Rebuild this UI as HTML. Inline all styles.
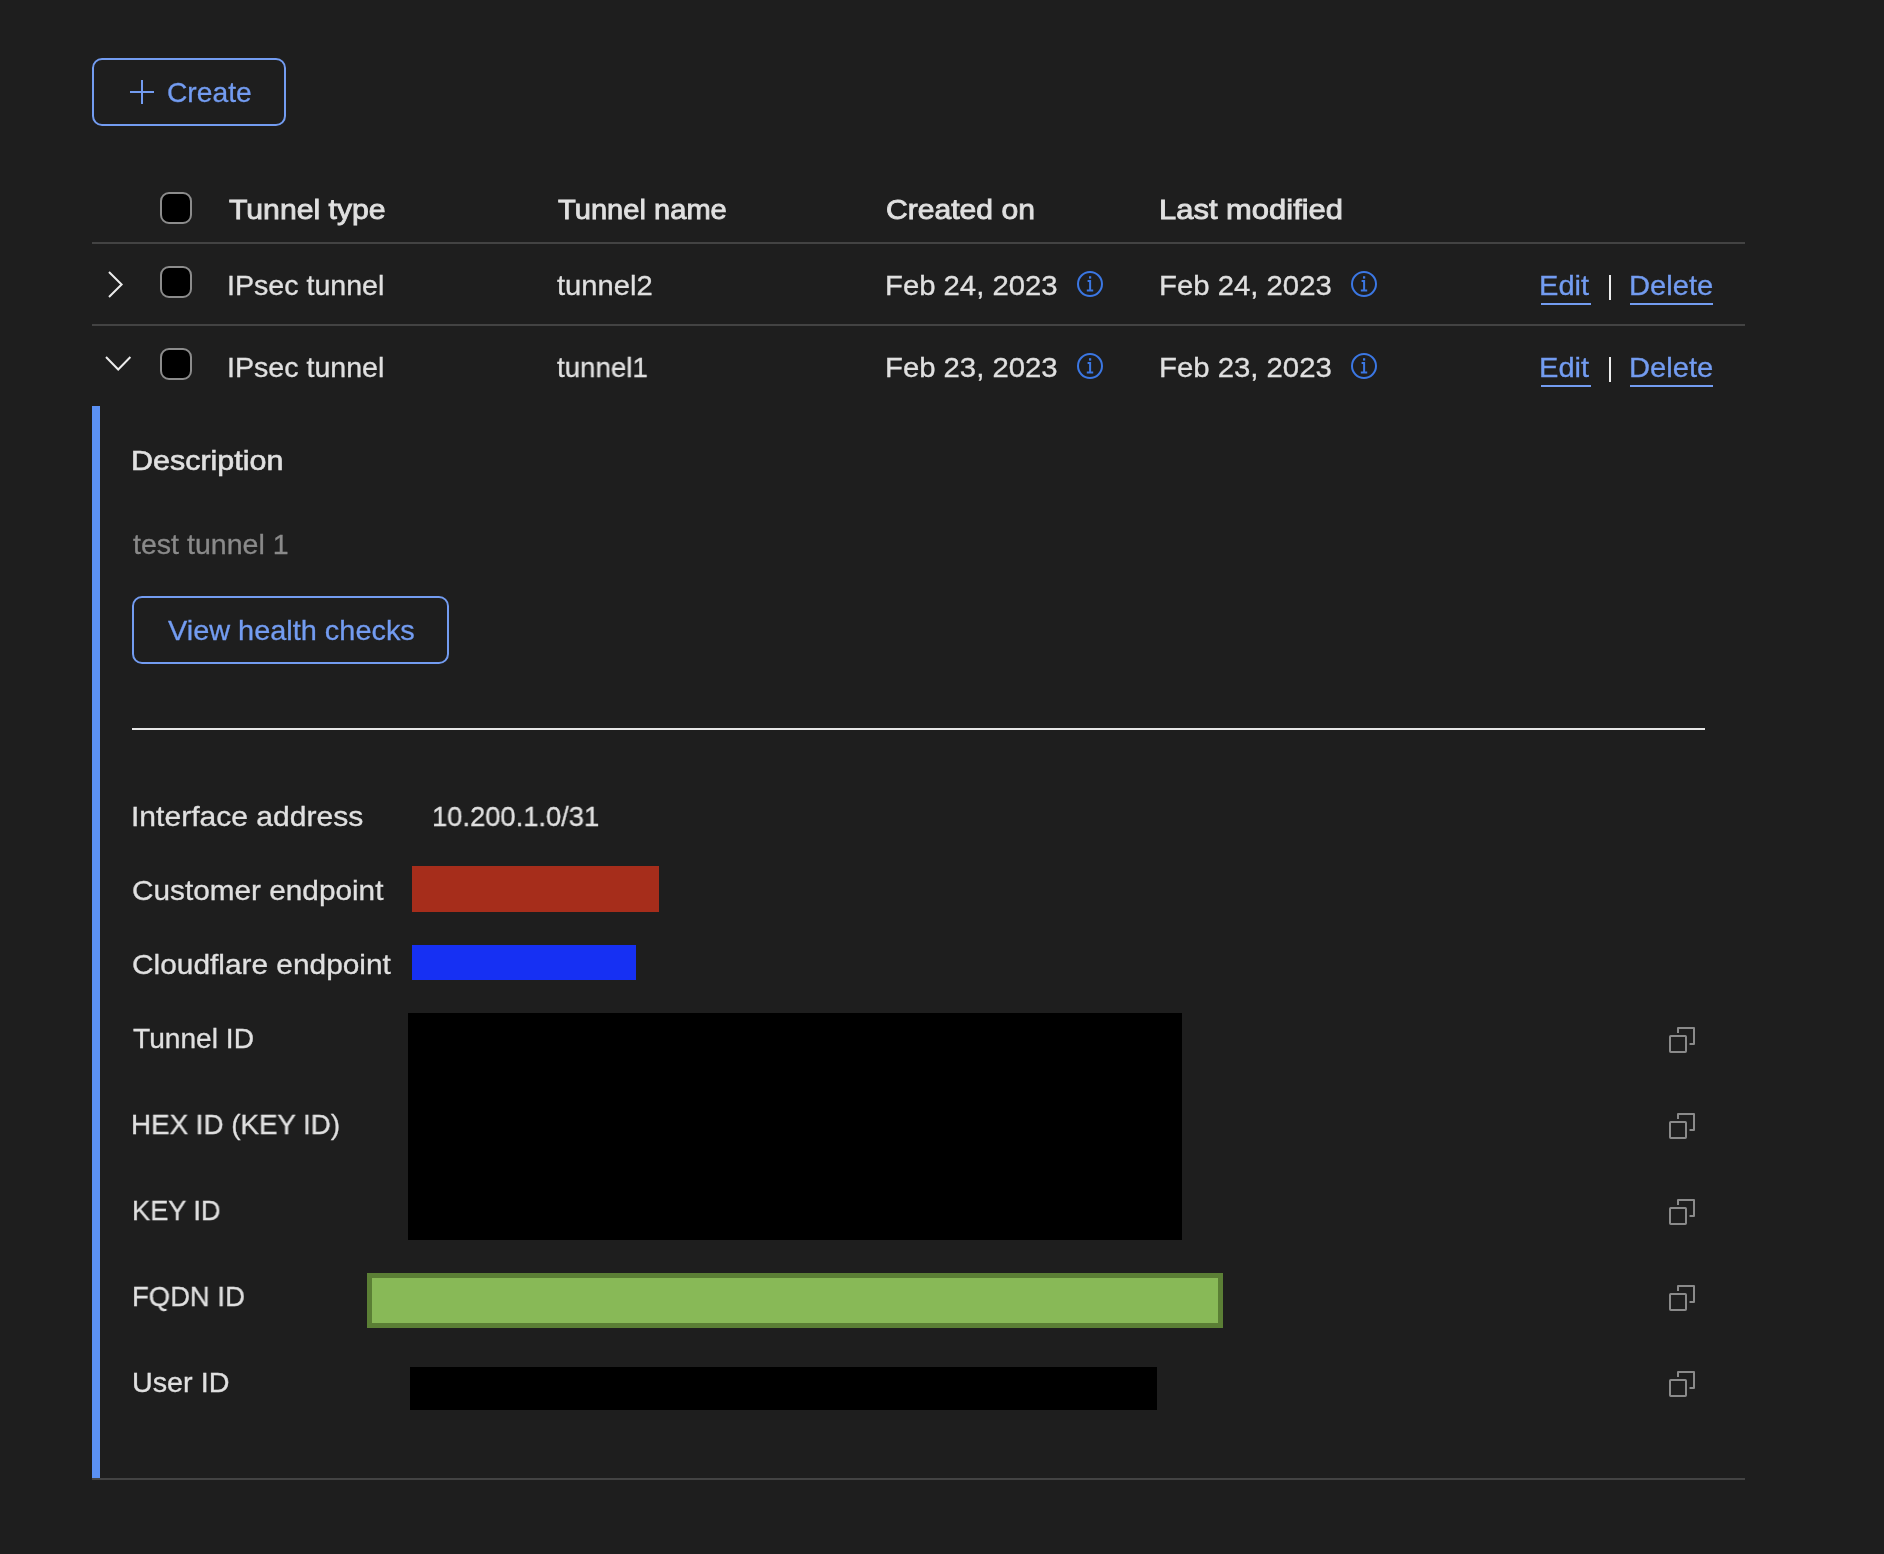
<!DOCTYPE html>
<html>
<head>
<meta charset="utf-8">
<style>
html,body{margin:0;padding:0;}
body{width:1884px;height:1554px;background:#1e1e1e;position:relative;overflow:hidden;font-family:"Liberation Sans",sans-serif;color:#e0e0e0;font-size:28px;}
.t{position:absolute;white-space:nowrap;line-height:32px;height:32px;transform-origin:0 0;will-change:transform;-webkit-text-stroke:0.3px currentColor;}
.b{-webkit-text-stroke:0.85px currentColor;}
.blue,.lnk{color:#739cf1;}
.btn{position:absolute;box-sizing:border-box;border:2px solid #739cf1;border-radius:10px;}
.hl{position:absolute;height:2px;background:#434343;}
.cb{position:absolute;box-sizing:border-box;width:32px;height:32px;border:2px solid #8c8c8c;border-radius:9px;background:#000;}
.ul{position:absolute;height:2px;background:#739cf1;}
.sep{position:absolute;width:2.6px;height:25px;background:#ededed;}
.box{position:absolute;}
svg{position:absolute;overflow:visible;}
</style>
</head>
<body>
<div class="btn" style="left:92px;top:58px;width:194px;height:68px;"></div>
<svg style="left:130px;top:80px" width="24" height="24"><path d="M12 0V24M0 12H24" stroke="#739cf1" stroke-width="2" fill="none"/></svg>
<div class="t blue" id="create" style="left:166.99px;top:77px;transform:scaleX(1.0074);">Create</div>

<div class="cb" style="left:160px;top:192px;"></div>
<div class="t b" id="h1" style="left:229.00px;top:193.5px;transform:scaleX(1.0779);">Tunnel type</div>
<div class="t b" id="h2" style="left:558.38px;top:193.5px;transform:scaleX(1.0395);">Tunnel name</div>
<div class="t b" id="h3" style="left:885.55px;top:193.5px;transform:scaleX(1.0745);">Created on</div>
<div class="t b" id="h4" style="left:1158.53px;top:193.5px;transform:scaleX(1.1049);">Last modified</div>
<div class="hl" style="left:92px;top:242px;width:1653px;"></div>

<svg style="left:108px;top:271px" width="16" height="27"><path d="M1 1L13.6 13.5L1 26" stroke="#ececec" stroke-width="2" fill="none"/></svg>
<div class="cb" style="left:160px;top:266px;"></div>
<div class="t " id="r1a" style="left:227.45px;top:270px;transform:scaleX(1.0212);">IPsec tunnel</div>
<div class="t " id="r1b" style="left:557.18px;top:270px;transform:scaleX(1.0418);">tunnel2</div>
<div class="t " id="r1c" style="left:884.73px;top:270px;transform:scaleX(1.0457);">Feb 24, 2023</div>
<svg style="left:1077px;top:271px" width="26" height="26"><circle cx="13" cy="13" r="12" stroke="#3b77e3" stroke-width="2" fill="none"/><rect x="12" y="5.2" width="2.2" height="2.4" fill="#3b77e3"/><path d="M10.6 10H13.1V19.4M9.8 19.6H16.2" stroke="#3b77e3" stroke-width="2" fill="none"/></svg>
<div class="t " id="r1d" style="left:1158.72px;top:270px;transform:scaleX(1.0469);">Feb 24, 2023</div>
<svg style="left:1351px;top:271px" width="26" height="26"><circle cx="13" cy="13" r="12" stroke="#3b77e3" stroke-width="2" fill="none"/><rect x="12" y="5.2" width="2.2" height="2.4" fill="#3b77e3"/><path d="M10.6 10H13.1V19.4M9.8 19.6H16.2" stroke="#3b77e3" stroke-width="2" fill="none"/></svg>
<div class="t lnk" id="r1e" style="left:1539.11px;top:270px;transform:scaleX(1.0385);">Edit</div>
<div class="ul" style="left:1541px;top:303px;width:50px;"></div>
<div class="sep" style="left:1608.5px;top:275px;"></div>
<div class="t lnk" id="r1f" style="left:1628.51px;top:270px;transform:scaleX(1.0411);">Delete</div>
<div class="ul" style="left:1630px;top:303px;width:83px;"></div>
<div class="hl" style="left:92px;top:324px;width:1653px;"></div>

<svg style="left:105px;top:356px" width="27" height="16"><path d="M1 1L13.2 13.5L25.4 1" stroke="#ececec" stroke-width="2" fill="none"/></svg>
<div class="cb" style="left:160px;top:348px;"></div>
<div class="t " id="r2a" style="left:227.45px;top:352px;transform:scaleX(1.0212);">IPsec tunnel</div>
<div class="t " id="r2b" style="left:557.30px;top:352px;transform:scaleX(0.9891);">tunnel1</div>
<div class="t " id="r2c" style="left:884.73px;top:352px;transform:scaleX(1.0457);">Feb 23, 2023</div>
<svg style="left:1077px;top:353px" width="26" height="26"><circle cx="13" cy="13" r="12" stroke="#3b77e3" stroke-width="2" fill="none"/><rect x="12" y="5.2" width="2.2" height="2.4" fill="#3b77e3"/><path d="M10.6 10H13.1V19.4M9.8 19.6H16.2" stroke="#3b77e3" stroke-width="2" fill="none"/></svg>
<div class="t " id="r2d" style="left:1158.72px;top:352px;transform:scaleX(1.0469);">Feb 23, 2023</div>
<svg style="left:1351px;top:353px" width="26" height="26"><circle cx="13" cy="13" r="12" stroke="#3b77e3" stroke-width="2" fill="none"/><rect x="12" y="5.2" width="2.2" height="2.4" fill="#3b77e3"/><path d="M10.6 10H13.1V19.4M9.8 19.6H16.2" stroke="#3b77e3" stroke-width="2" fill="none"/></svg>
<div class="t lnk" id="r2e" style="left:1539.11px;top:352px;transform:scaleX(1.0385);">Edit</div>
<div class="ul" style="left:1541px;top:385px;width:50px;"></div>
<div class="sep" style="left:1608.5px;top:357px;"></div>
<div class="t lnk" id="r2f" style="left:1628.51px;top:352px;transform:scaleX(1.0411);">Delete</div>
<div class="ul" style="left:1630px;top:385px;width:83px;"></div>

<div class="box" style="left:92px;top:406px;width:8px;height:1072px;background:#5b91f4;"></div>
<div class="t " id="desc" style="left:130.82px;top:445px;transform:scaleX(1.0876);-webkit-text-stroke:0.6px #e0e0e0;">Description</div>
<div class="t " id="test" style="left:133.00px;top:529px;transform:scaleX(1.0197);color:#8a8a8a;">test tunnel 1</div>
<div class="btn" style="left:132px;top:596px;width:317px;height:68px;"></div>
<div class="t blue" id="vhc" style="left:167.81px;top:615px;transform:scaleX(1.0318);">View health checks</div>
<div class="box" style="left:132px;top:728px;width:1573px;height:2px;background:#e6e6e6;"></div>

<div class="t " id="ifa" style="left:131.32px;top:801px;transform:scaleX(1.0738);">Interface address</div>
<div class="t " id="ifv" style="left:431.84px;top:801px;transform:scaleX(0.9763);">10.200.1.0/31</div>
<div class="t " id="cus" style="left:132.41px;top:875px;transform:scaleX(1.0627);">Customer endpoint</div>
<div class="box" style="left:412px;top:866px;width:247px;height:46px;background:#a62d1b;"></div>
<div class="t " id="clo" style="left:132.40px;top:949px;transform:scaleX(1.0661);">Cloudflare endpoint</div>
<div class="box" style="left:412px;top:945px;width:224px;height:35px;background:#1630f3;"></div>

<div class="t " id="tid" style="left:133.10px;top:1023px;transform:scaleX(1.0050);">Tunnel ID</div>
<div class="t " id="hex" style="left:131.02px;top:1109px;transform:scaleX(0.9904);">HEX ID (KEY ID)</div>
<div class="t " id="key" style="left:131.97px;top:1195px;transform:scaleX(0.9705);">KEY ID</div>
<div class="t " id="fq" style="left:131.64px;top:1281px;transform:scaleX(0.9804);">FQDN ID</div>
<div class="t " id="usr" style="left:131.84px;top:1367px;transform:scaleX(1.0262);">User ID</div>

<div class="box" style="left:408px;top:1013px;width:774px;height:227px;background:#000;"></div>
<div class="box" style="left:367px;top:1273px;width:856px;height:55px;box-sizing:border-box;border:5px solid #5b7f35;background:#88b957;"></div>
<div class="box" style="left:410px;top:1367px;width:747px;height:43px;background:#000;"></div>

<svg style="left:1669px;top:1027px" width="27" height="27"><path d="M9 6V1H25V17H20.5" stroke="#8a8a8a" stroke-width="2" stroke-linejoin="round" fill="none"/><rect x="1" y="9" width="16" height="16" rx="0.8" stroke="#8a8a8a" stroke-width="2" fill="none"/></svg>
<svg style="left:1669px;top:1113px" width="27" height="27"><path d="M9 6V1H25V17H20.5" stroke="#8a8a8a" stroke-width="2" stroke-linejoin="round" fill="none"/><rect x="1" y="9" width="16" height="16" rx="0.8" stroke="#8a8a8a" stroke-width="2" fill="none"/></svg>
<svg style="left:1669px;top:1199px" width="27" height="27"><path d="M9 6V1H25V17H20.5" stroke="#8a8a8a" stroke-width="2" stroke-linejoin="round" fill="none"/><rect x="1" y="9" width="16" height="16" rx="0.8" stroke="#8a8a8a" stroke-width="2" fill="none"/></svg>
<svg style="left:1669px;top:1285px" width="27" height="27"><path d="M9 6V1H25V17H20.5" stroke="#8a8a8a" stroke-width="2" stroke-linejoin="round" fill="none"/><rect x="1" y="9" width="16" height="16" rx="0.8" stroke="#8a8a8a" stroke-width="2" fill="none"/></svg>
<svg style="left:1669px;top:1371px" width="27" height="27"><path d="M9 6V1H25V17H20.5" stroke="#8a8a8a" stroke-width="2" stroke-linejoin="round" fill="none"/><rect x="1" y="9" width="16" height="16" rx="0.8" stroke="#8a8a8a" stroke-width="2" fill="none"/></svg>

<div class="hl" style="left:92px;top:1478px;width:1653px;"></div>
</body>
</html>
